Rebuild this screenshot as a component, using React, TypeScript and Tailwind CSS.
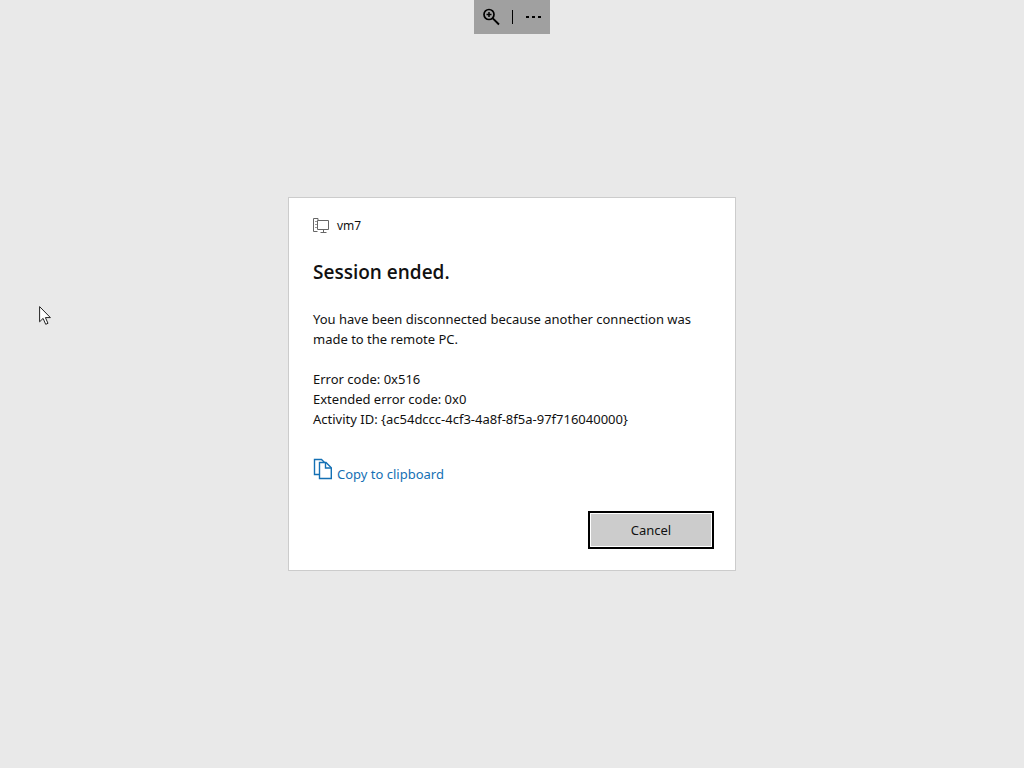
import React, { useState } from "react";

type DetailTypes = {
  label: string;
  value: string;
};

const details: DetailTypes[] = [
  { label: "Error code", value: "0x516" },
  { label: "Extended error code", value: "0x0" },
  { label: "Activity ID", value: "{ac54dccc-4cf3-4a8f-8f5a-97f716040000}" },
];

function ZoomIcon() {
  return (
    <svg width="18" height="18" viewBox="0 0 18 18" fill="none" stroke="black">
      <circle cx="7" cy="6.5" r="5" strokeWidth="1.7" />
      <path d="M10.8 10.3L17 16.5" strokeWidth="1.9" />
      <path d="M4.5 6.5h5M7 4v5" strokeWidth="1.5" />
    </svg>
  );
}

function MoreIcon() {
  return (
    <svg width="18" height="18" viewBox="0 0 18 18" fill="black">
      <rect x="2" y="8" width="3" height="2" />
      <rect x="8" y="8" width="3" height="2" />
      <rect x="14" y="8" width="3" height="2" />
    </svg>
  );
}

function ComputerIcon() {
  return (
    <svg width="16" height="16" viewBox="0 0 16 16" fill="none" stroke="#666">
      <path d="M4.5 13.5h-4V.5h4.5v2" />
      <path d="M2 3.5h2M2 6.5h2M2 9.5h2" stroke="#999" />
      <path d="M4.5 2.5h11v9h-11z" />
      <path d="M10.5 11.5v3M7.5 14.5h6" />
    </svg>
  );
}

function CopyIcon() {
  return (
    <svg
      width="20"
      height="22"
      viewBox="0 0 20 22"
      fill="none"
      stroke="#1470b4"
      strokeWidth="1.4"
    >
      <path d="M6.5 16.5H1.5V1.5H8.5L11.5 4.5" />
      <path d="M6.5 4.5H13L18.3 9.8V20.5H6.5z" />
      <path d="M12.5 4.5V10H18" />
    </svg>
  );
}

function Cursor() {
  return (
    <svg
      className="absolute left-[39px] top-[306px]"
      width="13"
      height="20"
      viewBox="0 0 13 20"
      fill="white"
      stroke="#222"
    >
      <path d="M.6 .6v15.2l3.5-3.4 2.6 5.9 2.3-1-2.6-5.7h5z" />
    </svg>
  );
}

export default function App() {
  const [open, setOpen] = useState<boolean>(true);

  const handleCopy = () => {
    const text = details.map((d) => `${d.label}: ${d.value}`).join("\n");
    navigator.clipboard?.writeText(text);
  };

  return (
    <div className="relative w-full h-screen flex flex-col justify-center items-center bg-[#e9e9e9] font-['Noto_Sans','Open_Sans',sans-serif] text-[#111]">
      <div className="absolute top-0 left-1/2 -translate-x-1/2 flex items-center justify-between w-[76px] h-[34px] px-2 bg-[#a0a0a0]">
        <button type="button" aria-label="Zoom">
          <ZoomIcon />
        </button>
        <div className="w-px h-[14px] bg-black" />
        <button type="button" aria-label="More">
          <MoreIcon />
        </button>
      </div>

      <Cursor />

      {open && (
        <div
          role="dialog"
          aria-labelledby="title"
          className="w-full max-w-md bg-white border border-[#cccccc] pl-6 pr-[21px] pt-[18px] pb-[21px]"
        >
          <div className="flex items-center gap-2 h-5 text-xs">
            <ComputerIcon />
            <span>vm7</span>
          </div>
          <h1
            id="title"
            className="mt-6 font-['Open_Sans','Noto_Sans',sans-serif] text-[19px] leading-6 font-semibold"
          >
            Session ended.
          </h1>
          <p className="mt-[25px] text-[13px] leading-5">
            You have been disconnected because another connection was made to
            the remote PC.
          </p>
          <div className="mt-5 text-[13px] leading-5">
            {details.map((detail) => (
              <p key={detail.label}>
                {detail.label}: {detail.value}
              </p>
            ))}
          </div>
          <button
            type="button"
            className="mt-[29px] flex items-end gap-1 h-[26px] text-[13px] leading-5 text-[#1470b4] cursor-pointer"
            onClick={handleCopy}
          >
            <span className="self-start">
              <CopyIcon />
            </span>
            Copy to clipboard
          </button>
          <div className="mt-[27px] flex justify-end">
            <button
              type="button"
              className="w-[126px] h-[38px] border-2 border-black bg-[#cccccc] text-[13px] leading-5 inset-ring inset-ring-white cursor-pointer"
              onClick={() => setOpen(false)}
            >
              Cancel
            </button>
          </div>
        </div>
      )}
    </div>
  );
}
